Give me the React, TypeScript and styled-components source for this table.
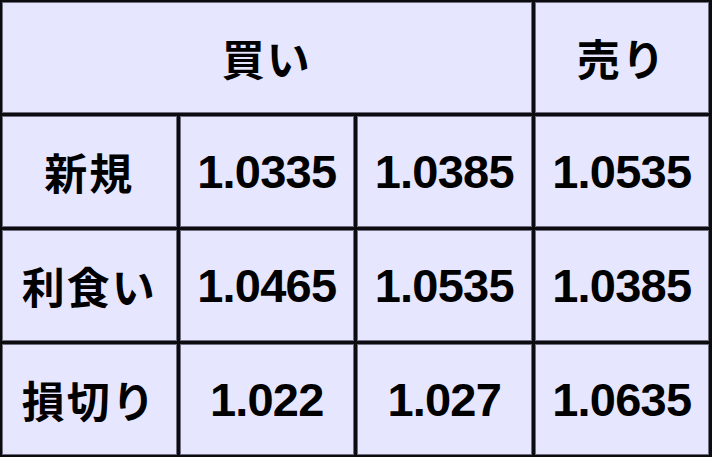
import React from "react";
import styled, { createGlobalStyle } from "styled-components";

const Global = createGlobalStyle`
  html, body { margin: 0; padding: 0; background: #ffffff; }
  #root { width: 712px; height: 457px; }
`;

const Table = styled.div`
  box-sizing: border-box;
  width: 712px;
  height: 457px;
  background: #0c0c10;
  padding: 2px 3px 2px 2px;
  display: grid;
  grid-template-columns: repeat(4, 1fr);
  grid-template-rows: repeat(4, 1fr);
  gap: 3px;
`;

const Cell = styled.div<{ $span?: number; $jp?: boolean }>`
  grid-column: span ${(p) => p.$span ?? 1};
  background: #e6e6ff;
  box-shadow: inset 0 0 0 1px #6e6e80;
  display: flex;
  align-items: center;
  justify-content: center;
  color: #000;
  font-weight: 700;
  font-family: ${(p) =>
    p.$jp
      ? `"Noto Sans CJK JP", "Noto Sans", sans-serif`
      : `"Liberation Sans", Arial, sans-serif`};
  font-size: ${(p) => (p.$jp ? "43px" : "47px")};
  letter-spacing: ${(p) => (p.$jp ? "2px" : "-0.8px")};
  line-height: 1;
`;

const rows = [
  { label: "新規", values: ["1.0335", "1.0385", "1.0535"] },
  { label: "利食い", values: ["1.0465", "1.0535", "1.0385"] },
  { label: "損切り", values: ["1.022", "1.027", "1.0635"] },
];

export default function App() {
  return (
    <>
      <Global />
      <Table>
        <Cell $span={3} $jp>
          買い
        </Cell>
        <Cell $jp>売り</Cell>
        {rows.map((r) => (
          <React.Fragment key={r.label}>
            <Cell $jp>{r.label}</Cell>
            {r.values.map((v, i) => (
              <Cell key={i}>{v}</Cell>
            ))}
          </React.Fragment>
        ))}
      </Table>
    </>
  );
}
